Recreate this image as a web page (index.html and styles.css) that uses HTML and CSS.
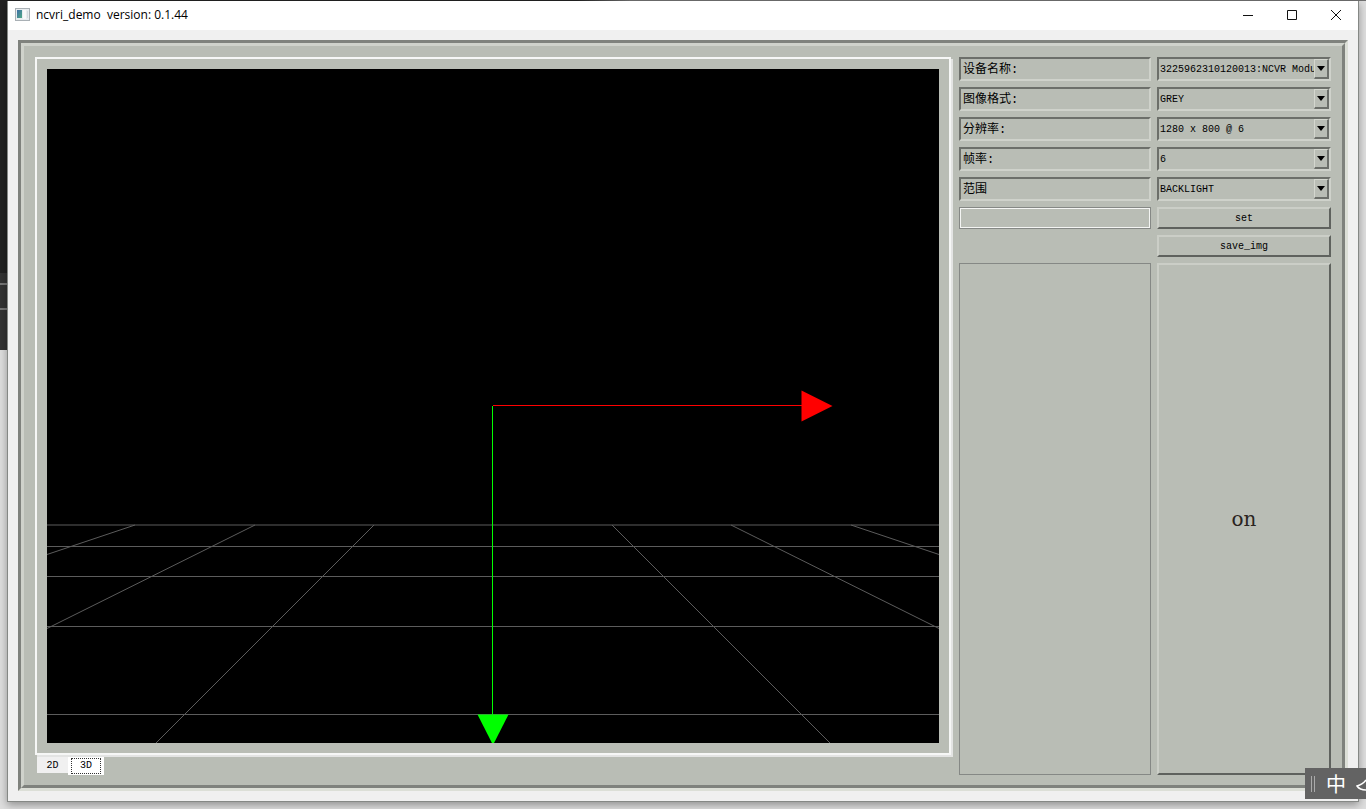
FILE: index.html
```html
<!DOCTYPE html>
<html lang="zh-CN">
<head>
<meta charset="utf-8">
<title>ncvri_demo</title>
<link rel="stylesheet" href="styles.css">
</head>
<body>
<div class="backdrop" aria-hidden="true"><span class="backdrop-bar"></span><span class="backdrop-bar"></span></div>
<div class="window">
  <header class="titlebar">
    <svg class="app-icon" width="15" height="13" viewBox="0 0 15 13" aria-hidden="true">
      <defs><linearGradient id="ig" x1="0" y1="0" x2="1" y2="1"><stop offset="0" stop-color="#3f6fa8"/><stop offset="1" stop-color="#4fa884"/></linearGradient></defs>
      <rect x=".5" y=".5" width="14" height="12" fill="#e8ecef" stroke="#a9b0b5"/>
      <rect x="2" y="2" width="5" height="8" fill="url(#ig)"/>
      <rect x="8" y="2" width="3" height="9" fill="#f8f8f8"/>
      <rect x="12" y="3" width="1" height="7" fill="#d5dade"/>
    </svg>
    <h1 class="title">ncvri_demo&nbsp; version: 0.1.44</h1>
    <div class="controls">
      <button class="control" aria-label="Minimize"><svg width="12" height="12" viewBox="0 0 12 12"><path d="M1 6.500h10" /></svg></button>
      <button class="control" aria-label="Maximize"><svg width="12" height="12" viewBox="0 0 12 12"><path d="M1.500 1.500h9v9h-9z"/></svg></button>
      <button class="control" aria-label="Close"><svg width="12" height="12" viewBox="0 0 12 12"><path d="M1 1l10 10M11 1L1 11"/></svg></button>
    </div>
  </header>
  <main class="frame">
    <div class="panel">
      <section class="viewer">
        <div class="pane">
          <svg class="scene" viewBox="0 0 892 674" preserveAspectRatio="xMidYMid slice" role="img" aria-label="3D view">
            <g class="grid-lines">
              <path d="M0 456H892M0 477.500H892M0 507.500H892M0 557.500H892M0 645.500H892"/>
              <path d="M88 456L0 485.500M208 456L0 559.500M327 456L109 674M565 456L783 674M684 456L892 559.500M804 456L892 485.500"/>
            </g>
            <path class="axis-x" d="M446 336.500H755"/>
            <path class="tip-x" d="M754.500 321.500L785.500 337L754.500 352.500z"/>
            <path class="axis-y" d="M445.500 337V646"/>
            <path class="tip-y" d="M430.500 645.500H461.500L446 676z"/>
          </svg>
        </div>
        <div class="tabs" role="tablist">
          <button class="tab" role="tab" aria-selected="false">2D</button>
          <button class="tab tab-active" role="tab" aria-selected="true"><span class="tab-focus">3D</span></button>
        </div>
      </section>
      <form class="settings">
        <label class="field-name" for="device">设备名称:</label>
        <div class="combo"><select id="device"><option>3225962310120013:NCVR Modu</option></select><span class="arrow"></span></div>
        <label class="field-name" for="format">图像格式:</label>
        <div class="combo"><select id="format"><option>GREY</option></select><span class="arrow"></span></div>
        <label class="field-name" for="resolution">分辨率:</label>
        <div class="combo"><select id="resolution"><option>1280 x 800 @ 6</option></select><span class="arrow"></span></div>
        <label class="field-name" for="rate">帧率:</label>
        <div class="combo"><select id="rate"><option>6</option></select><span class="arrow"></span></div>
        <label class="field-name" for="range">范围</label>
        <div class="combo"><select id="range"><option>BACKLIGHT</option></select><span class="arrow"></span></div>
        <input class="value" type="text" aria-label="value">
        <button class="button" type="button">set</button>
        <button class="button save" type="button">save_img</button>
        <div class="log"></div>
        <button class="button power" type="button">on</button>
      </form>
    </div>
  </main>
</div>
<aside class="ime">
  <span class="grip"></span>
  <span class="ime-mode">中</span>
  <svg class="moon" width="10" height="16" viewBox="0 0 10 16" aria-hidden="true"><path d="M10 4C8 7 5 9 1 10C3 13 6 14 10 14"/></svg>
</aside>
</body>
</html>
```
FILE: styles.css
```css
* { box-sizing: border-box; }

body {
  margin: 0;
  height: 100vh;
  padding: 1px 7px 7px;
  overflow: hidden;
  position: relative;
  background: #dedede;
  font-family: "Liberation Mono", "Noto Sans CJK SC", monospace;
  font-size: 10px;
  color: #000;
}

button, select, input { font: inherit; color: inherit; border-radius: 0; margin: 0; }

.backdrop {
  position: absolute;
  inset: 0 0 auto;
  height: 350px;
  background: linear-gradient(90deg, #222 0 577px, #707070 630px) top / 100% 1px no-repeat,
    linear-gradient(#222 0 273px, #333 273px) left / 7px 100% no-repeat;
  padding-top: 283px;
  display: flex;
  flex-direction: column;
  gap: 23px;
}
.backdrop-bar { width: 7px; height: 2px; background: #777; }

.window {
  position: relative;
  height: 100%;
  display: flex;
  flex-direction: column;
  background: #f0f0f0;
  border: solid #858885;
  border-width: 0 1px 1px;
  box-shadow: 0 3px 8px rgba(0, 0, 0, .35);
}

.titlebar {
  flex: none;
  height: 29px;
  display: flex;
  align-items: center;
  background: #fff;
  padding: 0 0 2px 7px;
}
.title {
  margin: 0 auto 0 6px;
  font: 400 12px/16px "Open Sans", "Noto Sans", sans-serif;
}
.controls { display: flex; }
.control {
  width: 44px;
  height: 26px;
  padding: 0;
  border: 0;
  background: none;
  display: grid;
  place-items: center;
}
.control svg { fill: none; stroke: #111; }

.frame {
  flex: 1;
  min-height: 0;
  margin: 10px;
  border: 3px solid;
  border-color: #7f827d #dcdfd7 #dcdfd7 #7f827d;
}
.panel {
  height: 100%;
  display: flex;
  gap: 6px;
  padding: 11px 11px 10px;
  background: #b9bdb5;
  border: 3px solid;
  border-color: #cfd2cb #7f827d #7f827d #cfd2cb;
}

.viewer { flex: 1; min-width: 0; display: flex; flex-direction: column; }
.pane {
  flex: 1;
  min-height: 0;
  margin: 0 2px 2px 0;
  padding: 10px;
  border: 2px solid #f6f7f6;
  box-shadow: 2px 2px 0 #e3e4e3;
}
.scene { display: block; width: 100%; height: 100%; background: #000; }
.grid-lines { fill: none; stroke: #5c5c5c; }
.axis-x { stroke: #f00; }
.axis-y { stroke: #0f0; }
.tip-x { fill: #f00; }
.tip-y { fill: #0f0; }

.tabs { display: flex; align-items: flex-start; height: 18px; padding-left: 2px; }
.tab {
  width: 31px;
  height: 16px;
  padding: 0;
  border: 0;
  background: #f0f0f0;
}
.tab-active { width: 36px; height: 18px; padding: 0 3px; background: #fff; }
.tab-focus { display: block; border: 1px dotted #333; line-height: 14px; }

.settings {
  width: 372px;
  flex: none;
  display: grid;
  grid-template-columns: 192px 174px;
  grid-template-rows: repeat(5, 24px) 22px 22px 1fr;
  gap: 6px;
}
.field-name, .combo {
  border: 2px solid;
  border-color: #6c6f6a #cfd2cb #cfd2cb #6c6f6a;
}
.field-name {
  padding-left: 2px;
  font-size: 12px;
  line-height: 22px;
}
.combo { display: flex; }
.combo select {
  flex: 1;
  min-width: 0;
  padding: 0 0 0 1px;
  border: 0;
  appearance: none;
  background: none;
}
.arrow {
  width: 15px;
  margin-left: -15px;
  position: relative;
  display: grid;
  place-items: center;
  pointer-events: none;
  background: #b9bdb5;
  border: solid;
  border-width: 1px 2px 2px 1px;
  border-color: #d4d7cf #6c6f6a #6c6f6a #d4d7cf;
}
.arrow::before {
  content: "";
  border: 4px solid transparent;
  border-top: 5px solid #000;
  border-bottom: 0;
}
.value {
  width: 100%;
  padding: 0 4px;
  background: none;
  border: 1px solid #858885;
  box-shadow: inset 0 0 0 1px #f4f5f3;
}
.button {
  padding: 0;
  background: none;
  border: 2px solid;
  border-color: #cbcec7 #5f625e #5f625e #cbcec7;
}
.save { grid-column: 2; }
.log { border: 1px solid #858885; }
.power { font: 20px "DejaVu Serif", "Liberation Serif", serif; color: #2a2420; }

.ime {
  position: absolute;
  right: 0;
  bottom: 10px;
  width: 61px;
  height: 31px;
  padding-left: 6px;
  display: flex;
  align-items: center;
  overflow: hidden;
  background: #636363;
  color: #fff;
}
.grip { width: 4px; height: 16px; border: solid #aaa; border-width: 0 1px; }
.ime-mode { margin: 0 10px 0 11px; font: 20px/30px "Noto Sans CJK SC", sans-serif; }
.moon { flex: none; fill: none; stroke: #fff; stroke-width: 1.500; }
```
